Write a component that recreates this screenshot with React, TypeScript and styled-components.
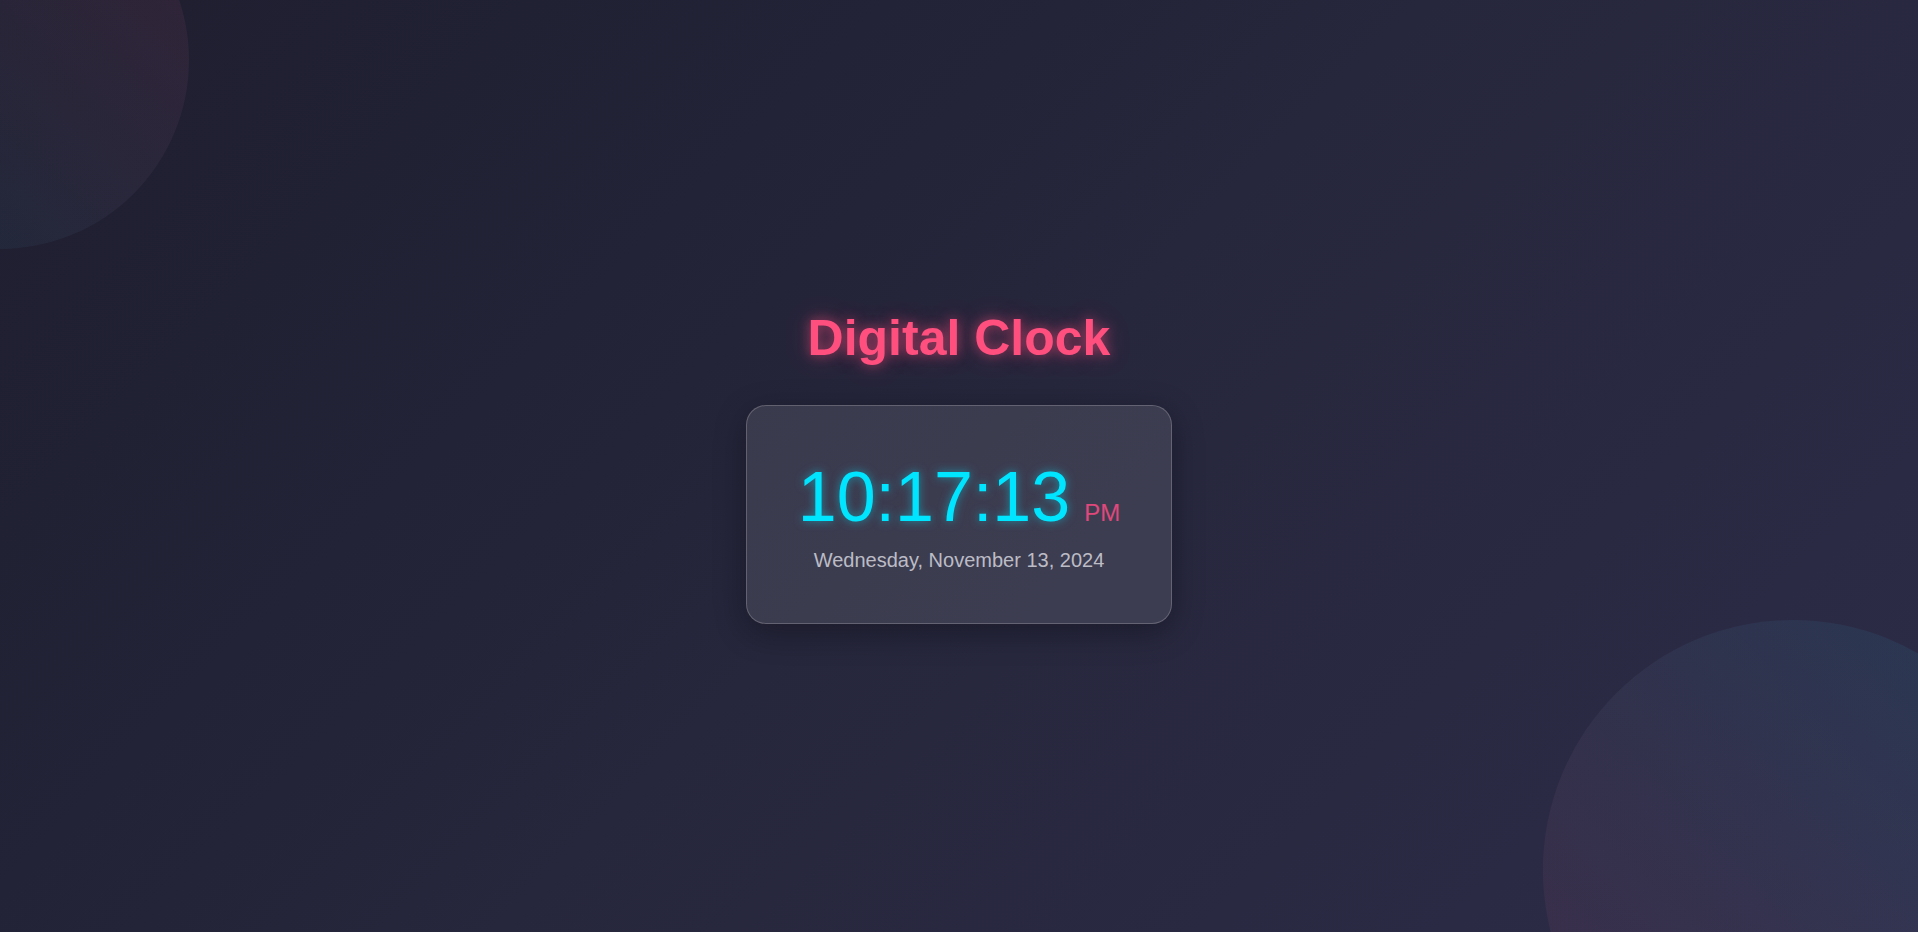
import React from "react";
import styled, { createGlobalStyle } from "styled-components";

const GlobalStyle = createGlobalStyle`
  * { box-sizing: border-box; }
  html, body { margin: 0; padding: 0; height: 100%; }
  body {
    font-family: "Liberation Sans", Arial, sans-serif;
    background: #1f1f30;
    overflow: hidden;
  }
`;

const Page = styled.main`
  position: relative;
  width: 100vw;
  height: 100vh;
  overflow: hidden;
  background: linear-gradient(135deg, #1e1e2f 0%, #26263c 50%, #2d2c48 100%);
  display: flex;
  flex-direction: column;
  align-items: center;
  justify-content: center;
`;

const Orb = styled.div<{ $variant: "top" | "bottom" }>`
  position: absolute;
  border-radius: 50%;
  pointer-events: none;
  ${({ $variant }) =>
    $variant === "top"
      ? `
    width: 378px;
    height: 378px;
    left: -189px;
    top: -129px;
    background: linear-gradient(225deg, rgba(255, 77, 125, 0.09), rgba(0, 229, 255, 0.05));
  `
      : `
    width: 500px;
    height: 500px;
    left: 1543px;
    top: 620px;
    background: linear-gradient(45deg, rgba(255, 77, 125, 0.08), rgba(0, 229, 255, 0.07));
  `}
`;

const Title = styled.h1`
  position: relative;
  margin: 0 0 38px;
  font-family: "Liberation Sans", Arial, sans-serif;
  font-size: 50px;
  font-weight: 700;
  color: #ff4f7f;
  text-shadow: 0 0 12px rgba(255, 77, 125, 0.55), 0 0 24px rgba(255, 77, 125, 0.3);
`;

const Card = styled.section`
  position: relative;
  width: 426px;
  padding: 51px 47px;
  border-radius: 20px;
  background: rgba(255, 255, 255, 0.1);
  border: 1px solid rgba(255, 255, 255, 0.2);
  box-shadow: 0 8px 32px rgba(0, 0, 0, 0.3);
  display: flex;
  flex-direction: column;
  align-items: center;
`;

const TimeRow = styled.div`
  display: flex;
  align-items: baseline;
  justify-content: center;
`;

const Time = styled.span`
  font-size: 70px;
  font-weight: 400;
  color: #00e5ff;
  text-shadow: 0 0 10px rgba(0, 229, 255, 0.5);
`;

const Period = styled.span`
  margin-left: 14px;
  font-size: 24px;
  color: #e0487c;
`;

const DateText = styled.div`
  margin-top: 12px;
  font-size: 20px;
  color: #bcbcc6;
`;

export default function App() {
  return (
    <>
      <GlobalStyle />
      <Page>
        <Orb $variant="top" />
        <Orb $variant="bottom" />
        <Title>Digital Clock</Title>
        <Card>
          <TimeRow>
            <Time>10:17:13</Time>
            <Period>PM</Period>
          </TimeRow>
          <DateText>Wednesday, November 13, 2024</DateText>
        </Card>
      </Page>
    </>
  );
}
